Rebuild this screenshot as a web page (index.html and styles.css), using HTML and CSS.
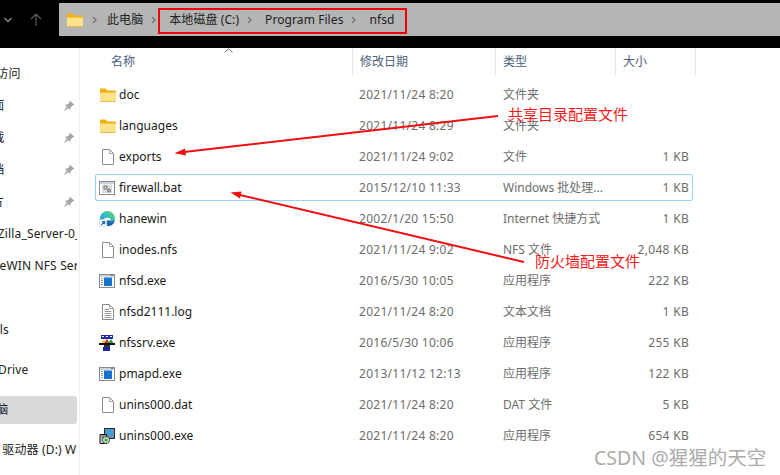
FILE: index.html
```html
<!DOCTYPE html>
<html lang="zh-CN">
<head>
<meta charset="utf-8">
<title>nfsd</title>
<link rel="stylesheet" href="styles.css">
</head>
<body>
<svg class="defs" width="0" height="0" aria-hidden="true">
  <defs>
    <linearGradient id="edge-top" x1="0" y1="1" x2="1" y2="0">
      <stop offset="0" stop-color="#1a8fd0"/>
      <stop offset=".55" stop-color="#2fc0c4"/>
      <stop offset="1" stop-color="#6fd24a"/>
    </linearGradient>
    <symbol id="i-folder" viewBox="0 0 18 16">
      <path d="M1 2.500Q1 1.500 2 1.500H6.500L8.500 3.500H16Q17 3.500 17 4.500V6H1Z" fill="#eeb012"/>
      <path d="M1 5.500H17V14Q17 15 16 15H2Q1 15 1 14Z" fill="#fde28c"/>
      <path d="M1 5.500H17" stroke="#f6c544"/>
      <path d="M1.500 14.500H16.500" stroke="#e9b94a"/>
    </symbol>
    <symbol id="i-file" viewBox="0 0 14 16">
      <path d="M1.500 .5H8.500L12.500 4.500V15.500H1.500Z" fill="#fff" stroke="#8a8a8a"/>
      <path d="M8.500 .5V4.500H12.500" fill="none" stroke="#a8a8a8"/>
    </symbol>
    <symbol id="i-log" viewBox="0 0 14 16">
      <path d="M1.500 .5H8.500L12.500 4.500V15.500H1.500Z" fill="#fff" stroke="#8a8a8a"/>
      <path d="M8.500 .5V4.500H12.500" fill="none" stroke="#a8a8a8"/>
      <path d="M3.500 5.500H8M3.500 7.500H10.500M3.500 9.500H10.500M3.500 11.500H10.500M3.500 13.500H10.500" stroke="#9a9a9a"/>
    </symbol>
    <symbol id="i-exe" viewBox="0 0 16 14">
      <rect x=".5" y=".5" width="15" height="13" fill="#fff" stroke="#7f8a94"/>
      <rect x="1" y="1" width="14" height="2" fill="#cdd3d8"/>
      <rect x="5" y="3.500" width="8" height="8.500" fill="#1673cf"/>
      <path d="M2 4.500H4M2 6.500H4M2 8.500H4M2 10.500H4" stroke="#8b97a3"/>
      <path d="M12 1.500H14" stroke="#6b7680"/>
    </symbol>
    <symbol id="i-bat" viewBox="0 0 16 14">
      <rect x=".5" y=".5" width="15" height="13" fill="#fff" stroke="#7f8a94"/>
      <rect x="1" y="1" width="14" height="2" fill="#cdd3d8"/>
      <rect x="3" y="3.500" width="10" height="8.500" fill="#d9d9d9"/>
      <circle cx="6.500" cy="6.500" r="2.200" fill="#8b8b8b"/>
      <circle cx="10" cy="9.500" r="2" fill="#777"/>
      <circle cx="6.500" cy="6.500" r=".8" fill="#eee"/>
      <circle cx="10" cy="9.500" r=".7" fill="#eee"/>
    </symbol>
    <symbol id="i-edge" viewBox="0 0 16 16">
      <circle cx="8.500" cy="7.500" r="7.500" fill="url(#edge-top)"/>
      <path d="M3 11Q4 7 8 6.500Q11.500 6.500 12 9.500H15.500Q16 11 14.500 12Q12 15 8.500 15Q5 15 3 11Z" fill="#fff"/>
      <path d="M8 9.500H15.800Q15.500 12 13 14Q10.500 15.500 8.500 15Q7 12.500 8 9.500Z" fill="#1663ad"/>
      <path d="M9 11.500H15Q13.500 10.500 12 10.500Z" fill="#2fa6d8"/>
      <rect x=".5" y="8.500" width="7" height="7" fill="#fff" stroke="#c4c4c4" stroke-width=".6"/>
      <path d="M2.200 14L5.300 10.900M3 10.600H5.600V13.200" fill="none" stroke="#1d6fc4" stroke-width="1.300"/>
    </symbol>
    <symbol id="i-nfs" viewBox="0 0 16 16">
      <rect x="2" y="0" width="12" height="4" fill="#1c2aa8"/>
      <path d="M3 1.500H5M7 1.500H9M11 1.500H13" stroke="#fff" stroke-width="1.200"/>
      <path d="M2 8L5 4 7 8Z" fill="#e8d21c"/>
      <path d="M5.500 8L8 3.500 10 8Z" fill="#d8262a"/>
      <path d="M9 8L12 4 14.500 8Z" fill="#2aa846"/>
      <rect x="0" y="8" width="16" height="2" fill="#111"/>
      <rect x="5" y="10" width="6" height="2" fill="#333"/>
      <rect x="4" y="12" width="7" height="4" fill="#1c2aa8"/>
    </symbol>
    <symbol id="i-setup" viewBox="0 0 16 16">
      <rect x="5.500" y=".5" width="10" height="10" fill="#6f8fb4" stroke="#1f2a34"/>
      <rect x="7.500" y="2" width="6" height="4.500" fill="#2fa5e2"/>
      <path d="M1 6.500H7.500V15.500H1Z" fill="#cfcfcf" stroke="#111"/>
      <path d="M2.500 8H6M2.500 10H6" stroke="#444"/>
      <circle cx="7" cy="12" r="3.600" fill="#bde9b2" stroke="#222" stroke-width=".7"/>
      <circle cx="7" cy="12" r="1.500" fill="#23a347"/>
    </symbol>
    <symbol id="i-pin" viewBox="0 0 12 12">
      <path d="M7 .5L11.500 5 9.500 5.500 7.500 8 7 10 2 5 4 4.500 6.500 2.500ZM3.800 6.800L.5 11.500 5.200 8.200Z" fill="#a2a6aa"/>
    </symbol>
    <symbol id="i-chev" viewBox="0 0 5 8">
      <path d="M1 1L4 4 1 7" fill="none" stroke="#757575" stroke-width="1.400"/>
    </symbol>
  </defs>
</svg>

<header class="topbar">
  <div class="nav">
    <svg class="nav-down" width="10" height="6" viewBox="0 0 10 6"><path d="M1.500 1L5 4.500 8.500 1" fill="none" stroke="#7a7a7a" stroke-width="1.600"/></svg>
    <svg class="nav-up" width="12" height="13" viewBox="0 0 12 13"><path d="M6 13V1M1 6L6 1 11 6" fill="none" stroke="#5c5c5c" stroke-width="1.200"/></svg>
  </div>
  <nav class="crumbs">
    <svg class="crumb-folder" width="18" height="16"><use href="#i-folder"/></svg>
    <svg class="chev chev-first" width="5" height="8"><use href="#i-chev"/></svg>
    <span>此电脑</span>
    <svg class="chev" width="5" height="8"><use href="#i-chev"/></svg>
    <span>本地磁盘 (C:)</span>
    <svg class="chev" width="5" height="8"><use href="#i-chev"/></svg>
    <span>Program Files</span>
    <svg class="chev" width="5" height="8"><use href="#i-chev"/></svg>
    <span>nfsd</span>
  </nav>
</header>

<div class="body">
  <aside class="side">
    <div class="side-row"><span class="side-text clip-quick">快速访问</span></div>
    <div class="side-row"><span class="side-text clip-two">桌面</span><svg class="pin" width="12" height="12"><use href="#i-pin"/></svg></div>
    <div class="side-row"><span class="side-text clip-two">下载</span><svg class="pin" width="12" height="12"><use href="#i-pin"/></svg></div>
    <div class="side-row"><span class="side-text clip-two">文档</span><svg class="pin" width="12" height="12"><use href="#i-pin"/></svg></div>
    <div class="side-row"><span class="side-text clip-two">图片</span><svg class="pin" width="12" height="12"><use href="#i-pin"/></svg></div>
    <div class="side-row"><span class="side-text clip-zilla">FileZilla_Server-0_9_60</span></div>
    <div class="side-row"><span class="side-text clip-hane">HaneWIN NFS Server</span></div>
    <div class="side-row side-spaced"><span class="side-text clip-tools">Tools</span></div>
    <div class="side-row side-next"><span class="side-text clip-one">OneDrive</span></div>
    <div class="side-row side-selected"><span class="side-text clip-pc">此电脑</span></div>
    <div class="side-row side-after"><span class="side-text clip-dvd">DVD 驱动器 (D:) WPS</span></div>
  </aside>

  <main class="list">
    <div class="head">
      <div class="head-cell head-name">名称<svg class="sort" width="9" height="5" viewBox="0 0 9 5"><path d="M.5 4.500L4.500 .8 8.500 4.500" fill="none" stroke="#6b6b6b"/></svg></div>
      <div class="head-cell">修改日期</div>
      <div class="head-cell">类型</div>
      <div class="head-cell">大小</div>
    </div>
    <div class="row"><svg class="ico" width="18" height="16"><use href="#i-folder"/></svg><span class="name">doc</span><span class="cell date">2021/11/24 8:20</span><span class="cell">文件夹</span><span class="cell size"></span></div>
    <div class="row"><svg class="ico" width="18" height="16"><use href="#i-folder"/></svg><span class="name">languages</span><span class="cell date">2021/11/24 8:29</span><span class="cell">文件夹</span><span class="cell size"></span></div>
    <div class="row"><svg class="ico ico-file" width="14" height="16"><use href="#i-file"/></svg><span class="name">exports</span><span class="cell date">2021/11/24 9:02</span><span class="cell">文件</span><span class="cell size">1 KB</span></div>
    <div class="row row-selected"><svg class="ico" width="16" height="14"><use href="#i-bat"/></svg><span class="name">firewall.bat</span><span class="cell date">2015/12/10 11:33</span><span class="cell">Windows 批处理...</span><span class="cell size">1 KB</span></div>
    <div class="row"><svg class="ico" width="16" height="16"><use href="#i-edge"/></svg><span class="name">hanewin</span><span class="cell date">2002/1/20 15:50</span><span class="cell">Internet 快捷方式</span><span class="cell size">1 KB</span></div>
    <div class="row"><svg class="ico ico-file" width="14" height="16"><use href="#i-file"/></svg><span class="name">inodes.nfs</span><span class="cell date">2021/11/24 9:02</span><span class="cell">NFS 文件</span><span class="cell size">2,048 KB</span></div>
    <div class="row"><svg class="ico" width="16" height="14"><use href="#i-exe"/></svg><span class="name">nfsd.exe</span><span class="cell date">2016/5/30 10:05</span><span class="cell">应用程序</span><span class="cell size">222 KB</span></div>
    <div class="row"><svg class="ico ico-file" width="14" height="16"><use href="#i-log"/></svg><span class="name">nfsd2111.log</span><span class="cell date">2021/11/24 8:20</span><span class="cell">文本文档</span><span class="cell size">1 KB</span></div>
    <div class="row"><svg class="ico" width="16" height="16"><use href="#i-nfs"/></svg><span class="name">nfssrv.exe</span><span class="cell date">2016/5/30 10:06</span><span class="cell">应用程序</span><span class="cell size">255 KB</span></div>
    <div class="row"><svg class="ico" width="16" height="14"><use href="#i-exe"/></svg><span class="name">pmapd.exe</span><span class="cell date">2013/11/12 12:13</span><span class="cell">应用程序</span><span class="cell size">122 KB</span></div>
    <div class="row"><svg class="ico ico-file" width="14" height="16"><use href="#i-file"/></svg><span class="name">unins000.dat</span><span class="cell date">2021/11/24 8:20</span><span class="cell">DAT 文件</span><span class="cell size">5 KB</span></div>
    <div class="row"><svg class="ico" width="16" height="16"><use href="#i-setup"/></svg><span class="name">unins000.exe</span><span class="cell date">2021/11/24 8:20</span><span class="cell">应用程序</span><span class="cell size">654 KB</span></div>
  </main>
</div>

<svg class="marks" width="780" height="475" viewBox="0 0 780 475" aria-hidden="true">
  <rect x="159" y="9" width="247" height="24" fill="none" stroke="#f00000" stroke-width="2"/>
  <path d="M498 116L184 152" stroke="#f01010" stroke-width="2" fill="none"/>
  <path d="M174.500 153.200L185 148.500 186 155.500Z" fill="#f01010"/>
  <path d="M524 262L240 195" stroke="#f01010" stroke-width="2" fill="none"/>
  <path d="M230.500 192.500L241.500 191.500 240 198.500Z" fill="#f01010"/>
</svg>
<div class="note note-share">共享目录配置文件</div>
<div class="note note-fire">防火墙配置文件</div>
<div class="watermark">CSDN @猩猩的天空</div>
</body>
</html>
```

FILE: styles.css
```css
* { box-sizing: border-box; }
html, body { margin: 0; padding: 0; }
body {
  width: 780px;
  height: 475px;
  overflow: hidden;
  position: relative;
  background: #fff;
  font: 12px/16px "Noto Sans", "Noto Sans CJK SC", sans-serif;
  color: #1a1a1a;
}
.defs { position: absolute; }

.topbar {
  height: 48px;
  background: #000;
  padding-top: 3px;
  display: flex;
  align-items: flex-start;
}
.nav {
  width: 59px;
  height: 33px;
  flex: none;
  display: flex;
  align-items: center;
  padding-left: 3px;
  gap: 17px;
}
.crumbs {
  flex: 1;
  height: 33px;
  background: #b5b5b5;
  display: flex;
  align-items: center;
  padding-left: 7px;
  color: #222;
  letter-spacing: .08px;
}
.crumb-folder { margin-right: 8px; }
.chev { margin: 0 13px 0 8px; flex: none; }
.chev-first { margin: 0 10px 0 0; }

.body { display: flex; height: 427px; }

.side {
  width: 80px;
  flex: none;
  border-right: 1px solid #f0f0f0;
  padding-top: 10px;
  overflow: hidden;
}
.side-row {
  height: 32px;
  width: 77px;
  display: flex;
  align-items: center;
  overflow: hidden;
  white-space: nowrap;
}
.side-spaced { margin-top: 32px; }
.side-next { margin-top: 8px; }
.side-selected {
  background: #d9d9d9;
  border-radius: 0 3px 3px 0;
  height: 28px;
  margin-top: 10px;
}
.side-after { margin-top: 10px; }
.side-text { flex: none; color: #222; letter-spacing: .15px; }
.clip-quick { margin-left: -28px; }
.clip-two { margin-left: -20px; }
.clip-zilla { margin-left: -22px; }
.clip-hane { margin-left: -24px; }
.clip-tools { margin-left: -21px; }
.clip-one { margin-left: -26px; }
.clip-pc { margin-left: -28px; }
.clip-dvd { margin-left: -26px; }
.pin { margin-left: 59px; flex: none; }

.list { flex: 1; padding-left: 15px; }
.head {
  height: 27px;
  display: grid;
  grid-template-columns: 258px 143px 120px 80px;
  margin-bottom: 4px;
}
.head-cell {
  border-right: 1px solid #e5e5e5;
  color: #4c607a;
  padding: 6px 0 0 7px;
  position: relative;
}
.head-name { padding-left: 16px; }
.sort { position: absolute; left: 129px; top: 0; }

.row {
  height: 31px;
  width: 598px;
  display: grid;
  grid-template-columns: 23px 240px 144px 1fr auto;
  align-items: center;
  border: 1px solid transparent;
  padding-right: 3px;
  border-radius: 2px;
}
.row-selected { border-color: #99d1ff; height: 27px; margin: 2px 0; }
.ico { margin-left: 3px; }
.ico-file { margin-left: 5px; }
.name { color: #1a1a1a; white-space: nowrap; }
.cell { color: #6d6d6d; white-space: nowrap; }
.date { letter-spacing: .27px; }
.size { text-align: right; letter-spacing: .3px; }

.marks { position: absolute; left: 0; top: 0; pointer-events: none; }
.note {
  position: absolute;
  color: #f41a1a;
  font-size: 15px;
  line-height: 20px;
  white-space: nowrap;
}
.note-share { left: 508px; top: 104px; }
.note-fire { left: 535px; top: 251px; }
.watermark {
  position: absolute;
  left: 594px;
  top: 447px;
  color: #ababab;
  font-size: 19.500px;
  line-height: 22px;
  white-space: nowrap;
}
```
